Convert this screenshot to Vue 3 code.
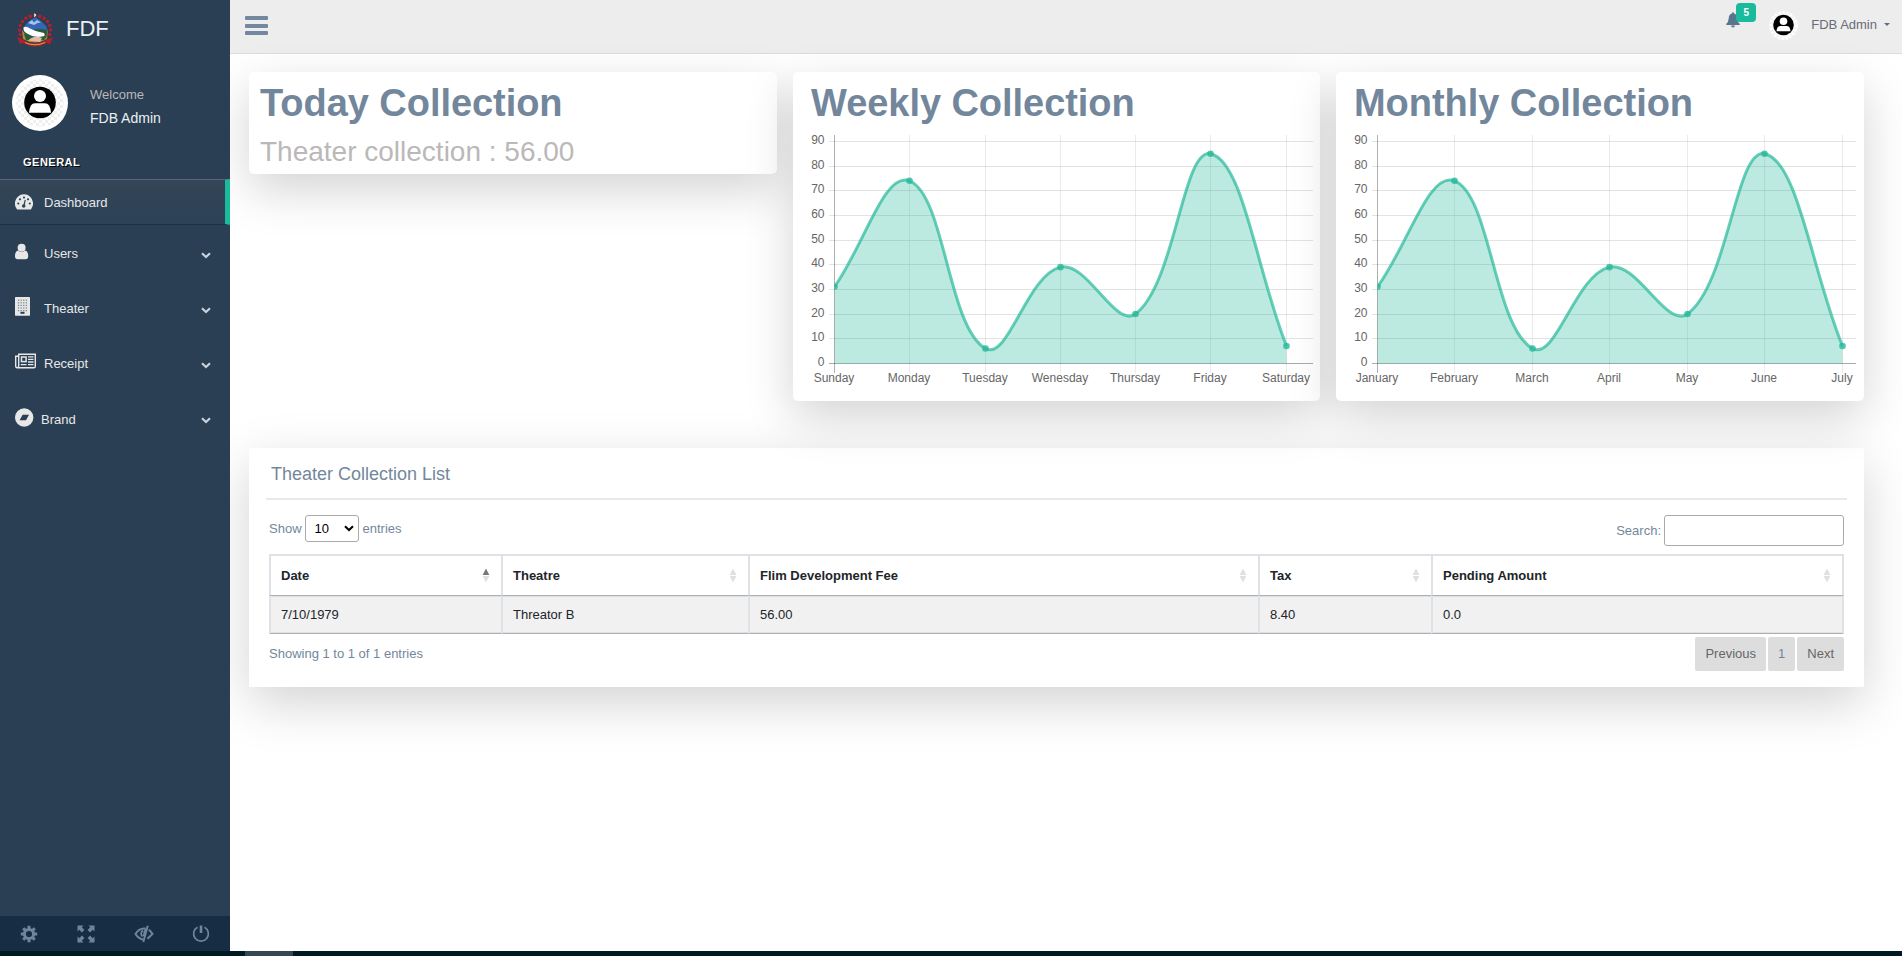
<script setup>
const menu = [
  { label: 'Users', icon: 'user' },
  { label: 'Theater', icon: 'building' },
  { label: 'Receipt', icon: 'news' },
  { label: 'Brand', icon: 'disc' },
]

const values = [31, 74, 6, 39, 20, 85, 7]

// Cubic spline through the points, tension 0.4, handles kept inside the plot
function spline(pts, top, bottom) {
  const clamp = (y) => Math.min(bottom, Math.max(top, y))
  const handles = pts.map((p, i) => {
    const a = pts[i - 1] || p
    const b = pts[i + 1] || p
    const d0 = Math.hypot(p[0] - a[0], p[1] - a[1])
    const d1 = Math.hypot(b[0] - p[0], b[1] - p[1])
    const f0 = (0.4 * d0) / (d0 + d1)
    const f1 = (0.4 * d1) / (d0 + d1)
    return {
      prev: [p[0] - f0 * (b[0] - a[0]), clamp(p[1] - f0 * (b[1] - a[1]))],
      next: [p[0] + f1 * (b[0] - a[0]), clamp(p[1] + f1 * (b[1] - a[1]))],
    }
  })
  let d = `M${pts[0]}`
  for (let i = 1; i < pts.length; i++) {
    d += ` C${handles[i - 1].next} ${handles[i].prev} ${pts[i]}`
  }
  return d
}

const tickRows = [236.5, 211.5, 187.5, 162.5, 137.5, 113.5, 88.5, 63.5, 39.5, 14.5].map((y, i) => ({
  y,
  label: i * 10,
}))

function makeChart(id, title, labels, xs) {
  const pts = values.map((v, i) => [xs[i], 236.3 - v * 2.466])
  const line = spline(pts, 8, 236.5)
  return {
    id, title, pts, line,
    area: `${line} L${xs[6]},236.5 L${xs[0]},236.5 Z`,
    cols: xs.map((x, i) => ({ x, label: labels[i] })),
  }
}

const charts = [
  makeChart('weekly', 'Weekly Collection',
    ['Sunday', 'Monday', 'Tuesday', 'Wenesday', 'Thursday', 'Friday', 'Saturday'],
    [41.5, 116.5, 192.5, 267.5, 342.5, 417.5, 493.5]),
  makeChart('monthly', 'Monthly Collection',
    ['January', 'February', 'March', 'April', 'May', 'June', 'July'],
    [41.5, 118.5, 196.5, 273.5, 351.5, 428.5, 506.5]),
]

const columns = [
  { label: 'Date', value: '7/10/1979', sorted: true },
  { label: 'Theatre', value: 'Threator B' },
  { label: 'Flim Development Fee', value: '56.00' },
  { label: 'Tax', value: '8.40' },
  { label: 'Pending Amount', value: '0.0' },
]

const beads = Array.from({ length: 13 }, (_, i) => {
  const a = Math.PI * (0.9 + (i * 1.2) / 12)
  return [19 + 15.5 * Math.cos(a), 17 + 14.5 * Math.sin(a)]
})
</script>

<template>
  <div class="page">
    <div class="shell">
      <aside class="sidebar">
        <div class="brand">
          <svg class="emblem" width="38" height="34" viewBox="0 0 38 34">
            <circle v-for="(b, i) in beads" :key="i" :cx="b[0]" :cy="b[1]" r="1.7" fill="#b3202c" />
            <path d="M1 24 L6 26 Q19 35 32 26 L37 24 L34 31 L31 30 Q19 37 7 30 L4 31 Z" fill="#b3202c" />
            <path d="M6 17 Q19 36 32 17 L31 26 Q19 33 7 26 Z" fill="#b9892f" />
            <path d="M7 15 L12 9 L16 6 L20 4.500 L25 8 L30 13 L32 18 L20 21 Z" fill="#3565b5" />
            <path d="M12 10 L16 7 L18 9.500 L21 7 L25 9.500 L21.500 10 L18 12 Z" fill="#a9c4ec" />
            <path d="M8 21 Q18 14 31 17 Q32 23 28 27 L10 27 Z" fill="#285c3b" />
            <path d="M7.500 14.500 Q10 12.500 14 15.500 Q20 19 28 20 Q30 23.500 26 23.500 Q18 25 12 21 Q7 19 7.500 14.500 Z" fill="#fff" />
            <path d="M12 27.500 Q18 21.500 26 25 L24 29 Z" fill="#e6b7ac" />
            <path d="M18.300 0 L20.300 2 L18.300 4.500 Z" fill="#fff" />
            <path d="M9 29.500 Q19 34 29 29.500" fill="none" stroke="#d9a93c" stroke-width="1" />
          </svg>
          <span class="brand-name">FDF</span>
        </div>
        <div class="profile">
          <svg width="56" height="56" viewBox="0 0 56 56">
            <defs>
              <pattern id="checker" width="6" height="6" patternUnits="userSpaceOnUse">
                <path d="M0 0H3V3H0Z M3 3H6V6H3Z" fill="#efefef" />
              </pattern>
            </defs>
            <circle cx="28" cy="28" r="28" fill="#fff" />
            <circle cx="28" cy="28" r="24" fill="url(#checker)" />
            <circle cx="28" cy="27.500" r="15.800" fill="#000" />
            <circle cx="28" cy="21" r="6" fill="#fff" />
            <path d="M17 37.700 Q17.800 28.300 23 28.300 H33 Q38.200 28.300 39 37.700 Z" fill="#fff" />
          </svg>
          <div class="profile-text">
            <span class="welcome">Welcome</span>
            <span class="name">FDB Admin</span>
          </div>
        </div>
        <h3 class="section">GENERAL</h3>
        <div class="item active">
          <svg class="item-icon" width="24" height="20" viewBox="0 0 24 20">
            <path d="M1.800 16 A9.100 9.100 0 1 1 16.200 16 Q15.900 16.500 15.300 16.500 H2.700 Q2.100 16.500 1.800 16 Z" fill="#e7e7e7" />
            <g fill="#2f4458">
              <circle cx="3.300" cy="10.500" r="1.100" /><circle cx="5" cy="6.300" r="1.100" />
              <circle cx="9" cy="4.500" r="1.100" /><circle cx="13" cy="6.300" r="1.100" />
              <circle cx="14.800" cy="10.500" r="1.100" /><circle cx="8.700" cy="13" r="1.800" />
              <path d="M9.700 6.700 L10.800 7 L9.600 13 L8.200 12.500 Z" />
            </g>
          </svg>
          <span>Dashboard</span>
        </div>
        <div v-for="m in menu" :key="m.label" class="item" :class="m.icon">
          <svg class="item-icon" width="24" height="22" viewBox="0 0 24 22">
            <g v-if="m.icon === 'user'" fill="#e7e7e7">
              <circle cx="6.600" cy="4.700" r="4" />
              <path d="M3.200 7.500 Q6.600 10.700 10 7.500 Q13.200 8.100 13.200 13.200 Q13.200 16.200 10.500 16.200 H2.700 Q0 16.200 0 13.200 Q0 8.100 3.200 7.500 Z" />
            </g>
            <g v-else-if="m.icon === 'building'">
              <rect x="0" y="0" width="15" height="18.700" rx=".6" fill="#e7e7e7" />
              <g fill="#74808c">
                <template v-for="r in 5" :key="r">
                  <rect v-for="c in 4" :key="c" :x="c * 2.6 + 0.3" :y="r * 2.6" width="1.300" height="1.200" />
                </template>
              </g>
              <rect x="5.500" y="14.800" width="4" height="2" fill="#2a3f54" />
            </g>
            <g v-else-if="m.icon === 'news'" fill="none" stroke="#e7e7e7">
              <path d="M3.700 2 V13 Q3.700 14.800 2.200 14.800 Q.7 14.800 .7 13 V3.200 H3.700 M2.200 14.800 H19 Q20.300 14.800 20.300 13.500 V1.200 H3.700 V13" stroke-width="1.400" />
              <rect x="6.500" y="4" width="4.600" height="4.600" stroke-width="1.500" />
              <path d="M13 3.800 H18.500 M13 6.400 H18.500 M13 9 H18.500 M5.700 11.700 H11.500 M13 11.700 H18.500" stroke-width="1.300" />
            </g>
            <g v-else>
              <circle cx="9.200" cy="9.500" r="9.200" fill="#e7e7e7" />
              <path d="M7.600 6.800 H14 L11 12.300 H4.600 Z" fill="#2a3f54" />
            </g>
          </svg>
          <span class="item-label">{{ m.label }}</span>
          <svg class="chev" width="10" height="7" viewBox="0 0 10 7">
            <path d="M1 1.300 L5 5 L9 1.300" fill="none" stroke="#c9d2db" stroke-width="2.200" />
          </svg>
        </div>
        <div class="tools">
          <span>
            <svg width="18" height="18" viewBox="0 0 18 18">
              <circle cx="9" cy="9" r="4.600" fill="none" stroke="#6f859c" stroke-width="3" />
              <g stroke="#6f859c" stroke-width="3">
                <path d="M9 .8 V4 M9 14 V17.200 M.8 9 H4 M14 9 H17.200 M3.200 3.200 L5.400 5.400 M12.600 12.600 L14.800 14.800 M3.200 14.800 L5.400 12.600 M12.600 5.400 L14.800 3.200" />
              </g>
            </svg>
          </span>
          <span>
            <svg width="18" height="18" viewBox="0 0 18 18" fill="#6f859c">
              <path id="arr" d="M.5 .5 H6.500 L4.800 2.300 L7.400 4.900 L4.900 7.400 L2.300 4.800 L.5 6.500 Z" />
              <use href="#arr" transform="translate(18 0) scale(-1 1)" />
              <use href="#arr" transform="translate(0 18) scale(1 -1)" />
              <use href="#arr" transform="translate(18 18) scale(-1 -1)" />
            </svg>
          </span>
          <span>
            <svg width="20" height="18" viewBox="0 0 20 18" fill="none" stroke="#6f859c">
              <path d="M11 3.500 Q5 3 1.500 9 Q4.500 13.500 9 14.500" stroke-width="2" />
              <path d="M9 5.500 Q5.500 8 8.500 11.500" stroke-width="1.800" />
              <path d="M13.800 .8 L9.300 17" stroke-width="1.900" />
              <path d="M9.800 6 L12.600 1 L11 12 L8.800 11 Z" fill="#6f859c" stroke="none" />
              <path d="M15 4.500 L18.500 9 L13.500 13.800" stroke-width="2" />
            </svg>
          </span>
          <span>
            <svg width="18" height="18" viewBox="0 0 18 18" fill="none" stroke="#6f859c">
              <path d="M5.500 2.300 A7.400 7.400 0 1 0 12.500 2.300" stroke-width="1.700" />
              <path d="M9 .5 V8" stroke-width="2.600" />
            </svg>
          </span>
        </div>
      </aside>

      <div class="main">
        <header class="topbar">
          <div class="burger"><i></i><i></i><i></i></div>
          <div class="top-right">
            <div class="bell">
              <svg width="14" height="16" viewBox="0 0 14 16" fill="#5a738e">
                <path d="M7 .3 Q8 .3 8 1.500 Q11.200 2.300 11.300 6.500 Q11.400 10.300 14 12.200 Q13.800 13 13 13 H1 Q.2 13 0 12.200 Q2.600 10.300 2.700 6.500 Q2.800 2.300 6 1.500 Q6 .3 7 .3 Z" />
                <path d="M5 13.500 H9 Q8.700 15.500 7 15.500 Q5.300 15.500 5 13.500 Z" />
              </svg>
              <span class="badge">5</span>
            </div>
            <svg class="mini" width="29" height="29" viewBox="0 0 29 29">
              <circle cx="14.500" cy="14.500" r="14.500" fill="#f3f3f3" />
              <circle cx="14.500" cy="14.500" r="13" fill="none" stroke="#fff" stroke-width="2.500" stroke-dasharray="2 2" />
              <circle cx="14.500" cy="14.500" r="11.300" fill="#fbfbfb" />
              <circle cx="14.500" cy="14" r="10.300" fill="#000" />
              <circle cx="14.500" cy="10.200" r="3.800" fill="#fff" />
              <path d="M7.500 20.300 Q7.800 14.900 11.500 14.900 H17.500 Q21.200 14.900 21.500 20.300 Z" fill="#fff" />
            </svg>
            <span class="top-name">FDB Admin</span>
            <i class="caret"></i>
          </div>
        </header>

        <main class="content">
          <section class="cards">
            <div class="card today">
              <h1>Today Collection</h1>
              <p>Theater collection : 56.00</p>
            </div>
            <div v-for="c in charts" :key="c.id" class="card chart">
              <h1>{{ c.title }}</h1>
              <svg width="527" height="265" viewBox="0 0 527 265">
                <clipPath :id="'clip-' + c.id"><rect x="41.500" y="8" width="486" height="229" /></clipPath>
                <g stroke="rgba(0,0,0,.11)">
                  <path v-for="t in tickRows" :key="t.y" :d="`M36 ${t.y}H520`" />
                  <path v-for="(x, i) in c.cols" :key="i" :d="`M${x.x} 8V246`" stroke="rgba(0,0,0,.08)" />
                </g>
                <path d="M41.500 8V246M36 236.500H520" stroke="rgba(0,0,0,.25)" />
                <g :clip-path="`url(#clip-${c.id})`">
                  <path :d="c.area" fill="rgba(38,185,154,.31)" />
                  <path :d="c.line" fill="none" stroke="rgba(38,185,154,.7)" stroke-width="3" />
                  <circle v-for="(p, i) in c.pts" :key="i" :cx="p[0]" :cy="p[1]" r="3.300" fill="rgba(38,185,154,.8)" />
                </g>
                <g class="ticks">
                  <text v-for="t in tickRows" :key="t.y" x="31.500" :y="t.y + 2" text-anchor="end">{{ t.label }}</text>
                  <text v-for="(x, i) in c.cols" :key="i" :x="x.x - 0.5" y="255" text-anchor="middle">{{ x.label }}</text>
                </g>
              </svg>
            </div>
          </section>

          <section class="panel">
            <h2>Theater Collection List</h2>
            <div class="controls">
              <label class="show">Show
                <span class="select">10
                  <svg width="10" height="7" viewBox="0 0 10 7"><path d="M1 1.200 L5 5 L9 1.200" fill="none" stroke="#000" stroke-width="2" /></svg>
                </span>
                entries</label>
              <label class="search">Search: <input type="text" /></label>
            </div>
            <div class="table">
              <div v-for="c in columns" :key="c.label" class="cell head">
                <span>{{ c.label }}</span>
                <svg width="8" height="16" viewBox="0 0 8 16">
                  <path d="M4 .5 L7.300 7 H.7 Z" :fill="c.sorted ? '#73787d' : '#dfe0e1'" />
                  <path d="M4 14.500 L7.300 8 H.7 Z" fill="#dfe0e1" />
                </svg>
              </div>
              <div v-for="c in columns" :key="c.value" class="cell body">{{ c.value }}</div>
            </div>
            <div class="foot">
              <span>Showing 1 to 1 of 1 entries</span>
              <div class="pager"><a class="off">Previous</a><a>1</a><a class="off">Next</a></div>
            </div>
          </section>
        </main>
      </div>
    </div>
    <div class="scroll"><i></i></div>
  </div>
</template>

<style>
body { background: #fff; overflow: hidden; }
</style>

<style scoped>
* { box-sizing: border-box; }
.page { height: 956px; display: flex; flex-direction: column; font: 13px/20px "Liberation Sans", Arial, sans-serif; color: #73879c; }
svg { display: block; flex: none; }
h1, h2, h3, p { margin: 0; }
.shell { height: 951px; display: flex; }
.scroll { height: 5px; background: #001a22; padding-left: 245px; }
.scroll i { display: block; width: 48px; height: 5px; background: #36474f; }

.sidebar { width: 230px; background: #2a3f54; display: flex; flex-direction: column; flex: none; position: relative; z-index: 1; }
.brand { display: flex; height: 75px; padding: 13px 0 0 16px; color: #ecf0f1; }
.brand-name { font-size: 22px; line-height: 32px; margin-left: 12px; }
.profile { display: flex; height: 56px; padding-left: 12px; }
.profile-text { display: flex; flex-direction: column; margin-left: 22px; padding-top: 11px; }
.welcome { color: #bab8b8; line-height: 18px; }
.name { color: #ecf0f1; font-size: 14px; line-height: 20px; margin-top: 4px; }
.section { height: 48px; padding: 21px 0 0 23px; font-size: 11px; line-height: 20px; letter-spacing: .5px; color: #fff; text-shadow: 1px 1px #000; }
.item { height: 55px; display: flex; align-items: flex-start; padding: 18px 19px 0 15px; color: #e7e7e7; line-height: 20px; }
.item-icon { margin-right: 5px; }
.item-label { margin-top: 1px; }
.item.active { height: 46px; padding-top: 13px; background: linear-gradient(#334556, #2c4257); border-top: 1px solid #566577; border-bottom: 1px solid #1f3041; border-right: 5px solid #1abb9c; }
.item.building .item-icon { margin-top: -1px; }
.item.disc .item-icon { margin-right: 2px; }
.item.disc .item-label { margin-top: 2px; }
.chev { margin: 8.500px 0 0 auto; }
.item.disc .chev { margin-top: 9px; }
.tools { margin-top: auto; height: 35px; background: #172d44; display: grid; grid-template-columns: repeat(4, 1fr); }
.tools span { display: flex; align-items: center; justify-content: center; }

.main { width: 1672px; display: flex; flex-direction: column; }
.topbar { height: 54px; background: #ededed; border-bottom: 1px solid #d9dee4; display: flex; justify-content: space-between; flex: none; }
.burger { padding: 16px 0 0 15px; display: flex; flex-direction: column; gap: 3.5px; }
.burger i { width: 23px; height: 4px; border-radius: 1px; background: #73879f; }
.top-right { display: flex; padding-right: 12px; }
.bell { position: relative; width: 30px; padding-top: 12px; margin-right: 13px; }
.badge { position: absolute; left: 10px; top: 3px; width: 20px; height: 19px; border-radius: 4px; background: #1abb9c; color: #fff; font-weight: bold; font-size: 10px; line-height: 19px; text-align: center; }
.mini { margin-top: 11px; }
.top-name { color: #686c76; line-height: 20px; margin: 15px 7px 0 13px; }
.caret { width: 6px; height: 3px; margin-top: 23px; border: 3px solid transparent; border-top-color: #686c76; border-bottom: 0; }

.content { padding: 18px 0 0 19px; }
.cards { display: grid; grid-template-columns: 528px 527px 528px; gap: 16px; align-items: start; }
.card { background: #fff; border-radius: 5px; box-shadow: 0 16px 48px rgba(0, 0, 0, .175); }
h1 { font-size: 38px; line-height: 44px; font-weight: bold; letter-spacing: -.05px; }
.today { height: 102px; padding: 9px 11px; }
.today p { font-size: 28px; line-height: 32px; margin-top: 11px; color: #bab8b8; }
.chart { height: 329px; padding-top: 9px; }
.chart h1 { padding-left: 18px; margin-bottom: 2px; }
.ticks { font-size: 12px; fill: #666; }

.panel { width: 1615px; height: 239px; margin-top: 47px; padding: 0 17px; background: #fff; box-shadow: 0 16px 48px rgba(0, 0, 0, .175); }
h2 { height: 52px; border-bottom: 2px solid #e6e9ed; padding: 14px 5px 0; font-size: 18px; line-height: 24px; font-weight: normal; }
.controls { display: flex; justify-content: space-between; align-items: flex-start; height: 54px; padding: 15px 3px 0; }
.show { display: flex; align-items: center; gap: 4px; height: 27px; }
.select { width: 54px; height: 27px; border: 1px solid #aaa; border-radius: 3px; color: #000; padding: 0 4px 0 9px; margin-left: -1px; display: flex; align-items: center; justify-content: space-between; }
.search { display: flex; align-items: center; gap: 3px; height: 31px; }
input { width: 180px; height: 31px; border: 1px solid #aaa; border-radius: 3px; background: #fff; outline: 0; }
.table { margin: 0 3px; width: 1575px; height: 80px; display: grid; grid-template-columns: 232px 247px 510px 173px 413px; grid-template-rows: 42px 38px; color: #212529; }
.cell { border-left: 2px solid #dee2e6; padding-left: 10px; }
.cell:nth-child(5n) { border-right: 2px solid #dee2e6; }
.head { border-top: 2px solid #dee2e6; border-bottom: 1px solid #adb0b3; font-weight: bold; padding: 9px 11px 0 10px; line-height: 22px; display: flex; justify-content: space-between; }
.head svg { margin-top: 3px; }
.body { background: #f1f1f1; border-bottom: 1px solid #adb0b3; line-height: 37px; box-shadow: inset 0 1px #dee2e6, inset 0 -1px #dee2e6; }
.foot { display: flex; justify-content: space-between; padding: 3px 3px 0; line-height: 34px; }
.pager { display: flex; gap: 2px; }
.pager a { height: 34px; padding: 0 10px; background: #ddd; border-radius: 2px; }
.pager .off { color: #666; }
</style>
